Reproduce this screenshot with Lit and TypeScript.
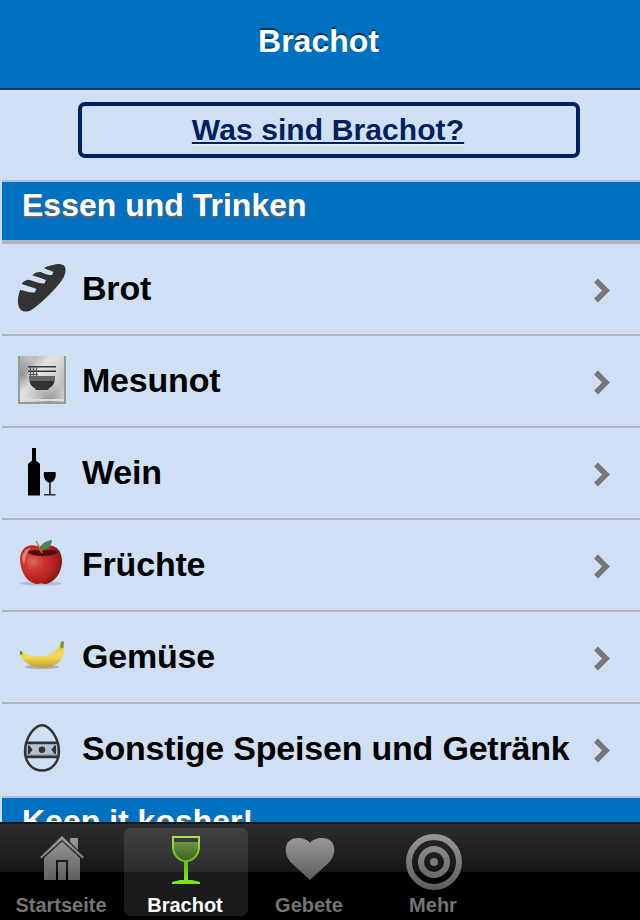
import { LitElement, html, css, svg, nothing } from 'lit';
import { customElement, property } from 'lit/decorators.js';
import { classMap } from 'lit/directives/class-map.js';

const foodIcons = {
  bread: svg`
    <path fill="#333" d="M0 39 C-1 32 3 25 4 19.500 C6 16 11 16 14 14 C14 9 19 8 23 8 C25 2.500 31 2 35 1 C40 -0.500 45 -0.500 47 3 C49 8 46 14 41 20 C33 30 21 41 14 45.500 C9 49 1 49 0 39Z"/>
    <path fill="#cfdff4" d="M22 2.500 C28 5 32 6.500 35.500 8 L34 11 C30 11.500 26 9.500 21.500 7.500Z
      M12 10.500 C18 12.500 23 14 28 16 L26.500 19.500 C21 20 16 17 10 15.500Z
      M2 19.500 C9 21.500 13 23 18.500 25 L16.500 28.500 C11 29 7 26.500 2 26Z"/>`,
  bowl: svg`
    <defs>
      <linearGradient id="steel" x1="0" y1="0.1" x2="1" y2="0.9">
        <stop offset="0" stop-color="#999"/>
        <stop offset="0.2" stop-color="#949494"/>
        <stop offset="0.38" stop-color="#d6d6d6"/>
        <stop offset="0.62" stop-color="#b8b8b8"/>
        <stop offset="0.8" stop-color="#949494"/>
        <stop offset="1" stop-color="#bbb"/>
      </linearGradient>
      <linearGradient id="sheen" x1="1" y1="0" x2="0" y2="1">
        <stop offset="0" stop-color="#fff" stop-opacity="0.3"/>
        <stop offset="0.4" stop-color="#fff" stop-opacity="0.4"/>
        <stop offset="0.65" stop-color="#fff" stop-opacity="0"/>
        <stop offset="0.9" stop-color="#fff" stop-opacity="0.4"/>
      </linearGradient>
    </defs>
    <path fill="url(#steel)" d="M0 0h48v48H0z"/>
    <path fill="url(#sheen)" d="M0 0h48v48H0z"/>
    <path fill="none" stroke="#999" stroke-width="2" d="M1 0v47h46V0"/>
    <path fill="#ddd" d="M2 43h44v2H2z"/>
    <path fill="#333" d="M10 10h28v1.500H10z M10 14.500h28v1.500H10z"/>
    <path fill="#666" d="M11 20h26v4.500H11z"/>
    <path fill="none" stroke="#555" d="M12.500 10v11 M15.500 12v9 M18.500 10v11 M11 18.500h9"/>
    <path fill="#333" d="M11.500 24.500h25C36 29 33.500 31 30.500 32.500V34h-13v-1.500C14.500 31 12 29 11.500 24.500Z"/>`,
  wine: svg`
    <path fill="#000" d="M14 0h4v12c0 2 4 2 4 5v30.500H10V17c0-3 4-3 4-5z"/>
    <path fill="#000" d="M26 24h11.500c1 5-1 9-4.500 10.500h-2.500C27 33 25 29 26 24z"/>
    <path fill="#333" d="M31 34h1.800v12H31z M26 46h11.500v1.500H26z"/>`,
  apple: svg`
    <defs>
      <radialGradient id="apple-skin" cx="0.32" cy="0.42" r="0.7">
        <stop offset="0" stop-color="#e0685f"/>
        <stop offset="0.35" stop-color="#cb3431"/>
        <stop offset="0.75" stop-color="#b02020"/>
        <stop offset="1" stop-color="#74191a"/>
      </radialGradient>
    </defs>
    <ellipse cx="23" cy="43.500" rx="21" ry="2" fill="#8fa0b8" opacity="0.5"/>
    <path fill="url(#apple-skin)" d="M2 18C3 9 9 4 16 5.500C20 6.500 25 6.500 30 5.500C38 4.500 44 11 44 21C44 30 39 40 31 43C28 45 25 43.500 23 43.500C21 43.500 18 45 15 43C7 40 2 29 2 18Z"/>
    <path fill="#4e0e0d" d="M9 12C12 10 18 10 23 11C29 10 36 9 40 12C36 17 15 18 9 12Z"/>
    <path fill="#e6a29b" opacity="0.7" d="M4 18C5 12 8 8 13 8C9 12 7 18 6 25Z"/>
    <path fill="none" stroke="#c88b2a" stroke-width="1.500" d="M18 1C20 4 22 8 24 13"/>
    <path fill="#4c8458" d="M22 10C22 4 27 1 34 0C34 5 30 10 22 10Z"/>`,
  banana: svg`
    <defs>
      <linearGradient id="banana-skin" x1="0" y1="0" x2="0" y2="1">
        <stop offset="0" stop-color="#e2cf50"/>
        <stop offset="0.6" stop-color="#f3d955"/>
        <stop offset="1" stop-color="#c29a30"/>
      </linearGradient>
    </defs>
    <ellipse cx="24" cy="35" rx="17" ry="2" fill="#7d8ca3" opacity="0.55"/>
    <path fill="url(#banana-skin)" d="M2.500 19C9 24 17 25 25 24C34 23 40 18 42.500 10L45.500 10C46 16 47 22 43 28C38 34 32 35.500 23 35.500C12 35 5 30 2 22Z"/>
    <path fill="#6f7d30" d="M2 18.500L4.500 20L4 23L2 22.500Z"/>
    <path fill="#87923d" d="M43 9.500L46 9.500L45.500 16L42 16.500Z"/>`,
  egg: svg`
    <path fill="#7f8994" d="M7.500 18h33v15h-33z"/>
    <path fill="#b3c1d4" d="M9 20.500h30v10H9z"/>
    <path fill="none" stroke="#333" stroke-width="2.400" d="M24 1.200C31.500 1.200 41 14 41 27.500C41 39 33 46.500 24 46.500C15 46.500 7 39 7 27.500C7 14 16.500 1.200 24 1.200Z M9 18.800h30 M7.500 33h33"/>
    <circle cx="24" cy="25.800" r="3.300" fill="#333"/>
    <path fill="#333" d="M10 21.500h1.500l3 4.300-3 4.300H10z M38 21.500h-1.500l-3 4.300 3 4.300H38z"/>`,
};

const tabIcons = {
  home: svg`
    <defs>
      <linearGradient id="g-home" x1="0" y1="4" x2="0" y2="48" gradientUnits="userSpaceOnUse">
        <stop offset="0" stop-color="#999"/>
        <stop offset="1" stop-color="#606060"/>
      </linearGradient>
    </defs>
    <g fill="url(#g-home)">
      <path d="M62 4L84 25L82.500 26.500L62 8L41.500 26.500L40 25Z"/>
      <path d="M70 6h8v12l-8-8z"/>
      <path d="M62 9.500L80 26V48H68V28H56V48H44V26Z"/>
      <path d="M58 30h8v18h-8z"/>
    </g>`,
  glass: svg`
    <defs>
      <linearGradient id="g-glass" x1="0" y1="4" x2="0" y2="52" gradientUnits="userSpaceOnUse">
        <stop offset="0" stop-color="#a5e755"/>
        <stop offset="0.5" stop-color="#66bf16"/>
        <stop offset="1" stop-color="#7bea1c"/>
      </linearGradient>
      <linearGradient id="g-wine" x1="0" y1="0" x2="0" y2="1">
        <stop offset="0" stop-color="#6d9446"/>
        <stop offset="1" stop-color="#3c6520"/>
      </linearGradient>
    </defs>
    <path fill="url(#g-wine)" d="M50 10h24v6c0 7-5 12-12 12s-12-5-12-12z"/>
    <path fill="none" stroke="url(#g-glass)" stroke-width="2" d="M49 5h26v10c0 8-6 14-13 14S49 23 49 15z"/>
    <path fill="url(#g-glass)" d="M60 28h4v20h-4z M48 52v-2l8-2h12l8 2v2z"/>`,
  heart: svg`
    <defs>
      <linearGradient id="g-heart" x1="0" y1="0" x2="0" y2="1">
        <stop offset="0" stop-color="#999"/>
        <stop offset="1" stop-color="#5c5c5c"/>
      </linearGradient>
    </defs>
    <path fill="url(#g-heart)" d="M62 48L43 30.500C39 26 37 21 38 15C39 9 44 6 50 6C55 6 60 8 62 11C64 8 69 6 74 6C80 6 85 9 86 15C87 21 85 26 81 30.500Z"/>`,
  target: svg`
    <defs>
      <linearGradient id="g-target" x1="0" y1="2" x2="0" y2="58" gradientUnits="userSpaceOnUse">
        <stop offset="0" stop-color="#999"/>
        <stop offset="1" stop-color="#5c5c5c"/>
      </linearGradient>
    </defs>
    <g fill="none" stroke="url(#g-target)" stroke-width="6">
      <circle cx="62" cy="30" r="25"/>
      <circle cx="62" cy="30" r="13"/>
    </g>
    <circle cx="62" cy="30" r="4" fill="url(#g-target)"/>`,
};

const foods = [
  { icon: 'bread', label: 'Brot' },
  { icon: 'bowl', label: 'Mesunot' },
  { icon: 'wine', label: 'Wein' },
  { icon: 'apple', label: 'Früchte' },
  { icon: 'banana', label: 'Gemüse' },
  { icon: 'egg', label: 'Sonstige Speisen und Getränk' },
];

const tabs = [
  { icon: 'home', label: 'Startseite' },
  { icon: 'glass', label: 'Brachot' },
  { icon: 'heart', label: 'Gebete' },
  { icon: 'target', label: 'Mehr' },
];

@customElement('food-row')
export class FoodRow extends LitElement {
  @property() icon = '';
  @property() label = '';

  static styles = css`
    :host {
      display: flex;
      align-items: flex-start;
      box-sizing: border-box;
      height: 92px;
      padding: 0 29px 0 16px;
      border-bottom: 2px solid #b1b2b6;
    }

    :host(:last-of-type) {
      border-bottom: 0;
    }

    .icon {
      flex: none;
      width: 48px;
      height: 48px;
      margin-top: 20px;
    }

    .label {
      flex: 1;
      min-width: 0;
      margin: 0 21px 0 16px;
      overflow: hidden;
      color: #000;
      font-size: 34px;
      font-weight: 700;
      letter-spacing: -0.2px;
      line-height: 88px;
      white-space: nowrap;
    }

    .chevron {
      flex: none;
      width: 19px;
      height: 26px;
      margin-top: 33px;
    }
  `;

  render() {
    return html`
      <svg class="icon" viewBox="0 0 48 48">${foodIcons[this.icon] ?? nothing}</svg>
      <span class="label">${this.label}</span>
      <svg class="chevron" viewBox="0 0 19 26">
        <path d="M4 3.500L14 13.500L4 23.500" fill="none" stroke="#777" stroke-width="5.500"/>
      </svg>
    `;
  }
}

@customElement('tab-item')
export class TabItem extends LitElement {
  @property() icon = '';
  @property() label = '';
  @property({ type: Boolean }) active = false;

  static styles = css`
    :host {
      display: block;
      width: 124px;
    }

    .tab {
      display: flex;
      flex-direction: column;
      align-items: center;
      box-sizing: border-box;
      height: 88px;
      margin-top: 4px;
      padding-top: 4px;
      border-radius: 7px;
      color: #747474;
      font-size: 20px;
      font-weight: 700;
      line-height: 22px;
      text-indent: -2px;
    }

    .tab.active {
      color: #fff;
      background: linear-gradient(#414141, #2c2c2c 44px, #1a1a1a 44px);
    }

    .glyph {
      flex: none;
      width: 124px;
      height: 62px;
    }
  `;

  render() {
    return html`
      <div class=${classMap({ tab: true, active: this.active })}>
        <svg class="glyph" viewBox="0 0 124 62">${tabIcons[this.icon] ?? nothing}</svg>
        <span>${this.label}</span>
      </div>
    `;
  }
}

@customElement('app-root')
export class AppRoot extends LitElement {
  static styles = css`
    :host {
      display: flex;
      flex-direction: column;
      width: 640px;
      height: 920px;
      overflow: hidden;
      background: #cfdff4;
      font-family: "Liberation Sans", Arial, sans-serif;
    }

    .title {
      flex: none;
      box-sizing: border-box;
      height: 90px;
      border-bottom: 2px solid #26364f;
      background: #0070c0;
      color: #fff;
      font-size: 32px;
      font-weight: 700;
      line-height: 82px;
      text-align: center;
      text-indent: -3px;
      text-shadow: 0 -2px 1px rgba(0, 0, 0, 0.5);
    }

    .content {
      flex: 1;
      min-height: 0;
      overflow: hidden;
    }

    .about {
      display: block;
      box-sizing: border-box;
      width: 502px;
      height: 56px;
      margin: 12px 0 22px 78px;
      border: 4px solid #002060;
      border-radius: 7px;
      color: #002060;
      font-size: 30px;
      font-weight: 700;
      letter-spacing: 0.1px;
      line-height: 48px;
      text-align: center;
      text-decoration: underline;
      text-decoration-thickness: 2px;
      text-indent: -2px;
      text-underline-offset: 2px;
      text-shadow: 0 2px 0 rgba(255, 255, 255, 0.4);
    }

    .list {
      margin-left: 2px;
    }

    .section {
      box-sizing: border-box;
      height: 64px;
      padding-left: 20px;
      border-top: 2px solid #b3c0cf;
      border-bottom: 4px solid #b1b4ba;
      background: #0070c0;
      background-clip: padding-box;
      color: #fff;
      font-size: 32px;
      font-weight: 700;
      line-height: 46px;
      text-shadow: 0 2px 1px #666;
    }

    .tabs {
      display: flex;
      flex: none;
      box-sizing: border-box;
      height: 98px;
      border-top: 2px solid #101820;
      background: linear-gradient(#2e2e2e, #151515 48px, #000 48px);
      background-origin: padding-box;
    }
  `;

  render() {
    return html`
      <header class="title">Brachot</header>
      <main class="content">
        <a class="about">Was sind Brachot?</a>
        <div class="list">
          <div class="section">Essen und Trinken</div>
          ${foods.map((food) => html`<food-row .icon=${food.icon} .label=${food.label}></food-row>`)}
          <div class="section">Keep it kosher!</div>
        </div>
      </main>
      <nav class="tabs">
        ${tabs.map((tab) => html`
          <tab-item .icon=${tab.icon} .label=${tab.label} .active=${tab.label === 'Brachot'}></tab-item>
        `)}
      </nav>
    `;
  }
}
